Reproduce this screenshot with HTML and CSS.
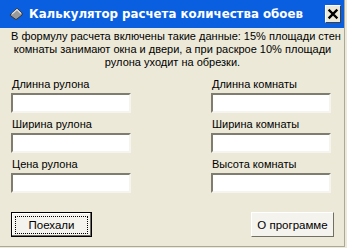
FILE: index.html
```html
<!DOCTYPE html>
<html>
<head>
<meta charset="utf-8">
<link rel="stylesheet" href="styles.css">
</head>
<body>
<div class="window">
  <div class="titlebar">
    <svg class="icon" width="16" height="16" viewBox="0 0 16 16">
      <path d="M2 9 L8 3 Q9 2 10 3 L14 7 Q15 8 14 9 L9 13 Q8 14 7 13 L3 10 Q2 9.5 2 9 Z" fill="#9a9a9a" stroke="#333" stroke-width="1"/>
      <path d="M4 8 L9 3.5 L13 7.5" fill="none" stroke="#e0e0e0" stroke-width="1.2"/>
    </svg>
    <span class="title">Калькулятор расчета количества обоев</span>
    <div class="close">
      <svg width="14" height="16" viewBox="0 0 14 16">
        <path d="M3.5 4.5 L10.5 11.5 M10.5 4.5 L3.5 11.5" stroke="#000" stroke-width="2.4" stroke-linecap="square"/>
      </svg>
    </div>
  </div>
  <div class="content">
    <p class="info">В формулу расчета включены такие данные: 15% площади стен<br>комнаты занимают окна и двери, а при раскрое 10% площади<br>рулона уходит на обрезки.</p>
    <div class="fields">
      <div class="col">
        <label class="field"><span>Длинна рулона</span><input type="text"></label>
        <label class="field"><span>Ширина рулона</span><input type="text"></label>
        <label class="field"><span>Цена рулона</span><input type="text"></label>
      </div>
      <div class="col">
        <label class="field"><span>Длинна комнаты</span><input type="text"></label>
        <label class="field"><span>Ширина комнаты</span><input type="text"></label>
        <label class="field"><span>Высота комнаты</span><input type="text"></label>
      </div>
    </div>
    <div class="buttons">
      <button class="btn default"><span class="focus">Поехали</span></button>
      <button class="btn">О программе</button>
    </div>
  </div>
</div>
</body>
</html>
```

FILE: styles.css
```css
html, body {
  margin: 0;
  padding: 0;
  background: #ece9d8;
}
.window {
  width: 345px;
  height: 247px;
  box-sizing: border-box;
  border-right: 1px solid #aca899;
  border-bottom: 1px solid #aca899;
  background: #ece9d8;
  font-family: "Liberation Sans", Arial, sans-serif;
  font-size: 11px;
  color: #000;
  display: flex;
  flex-direction: column;
}
.titlebar {
  height: 28px;
  background: #0a5fe0;
  display: flex;
  align-items: center;
  padding: 0 3px 0 8px;
  color: #fff;
}
.icon {
  flex: none;
}
.title {
  margin-left: 5px;
  font-family: "DejaVu Sans", sans-serif;
  font-weight: bold;
  font-size: 11.8px;
  flex: 1;
  white-space: nowrap;
}
.close {
  width: 16px;
  height: 18px;
  background: #ece9d8;
  border: 1px solid #fff;
  border-right-color: #404040;
  border-bottom-color: #404040;
  box-sizing: border-box;
  display: flex;
  align-items: center;
  justify-content: center;
}
.content {
  flex: 1;
  display: flex;
  flex-direction: column;
  padding: 2px 0 0 11px;
}
.info {
  margin: 0;
  text-align: center;
  line-height: 13px;
  font-size: 11px;
  white-space: nowrap;
  padding-right: 10px;
}
.fields {
  display: grid;
  grid-template-columns: 120px 120px;
  column-gap: 80px;
  margin-top: 9px;
}
.col {
  display: flex;
  flex-direction: column;
  gap: 5px;
}
.field {
  display: flex;
  flex-direction: column;
}
.field span {
  height: 15px;
  line-height: 13px;
  padding-left: 1px;
  font-size: 11px;
}
.field input {
  width: 120px;
  height: 20px;
  box-sizing: border-box;
  margin: 0;
  background: #fff;
  border: 2px solid;
  border-color: #7f7c70 #f5f4ee #f5f4ee #7f7c70;
  outline: none;
}
.buttons {
  display: flex;
  justify-content: space-between;
  margin-top: 19px;
  padding-right: 10px;
}
.btn {
  font-family: "Liberation Sans", Arial, sans-serif;
  font-size: 11.5px;
  background: #f4f3ee;
  border: 1px solid;
  border-color: #fff #716f64 #716f64 #fff;
  height: 25px;
  width: 83px;
  padding: 0;
  color: #000;
}
.btn.default {
  width: 81px;
  border: 1px solid #000;
  box-shadow: inset -1px -1px 0 #716f64, inset 1px 1px 0 #fff;
  display: flex;
  align-items: center;
  justify-content: center;
}
.focus {
  display: flex;
  align-items: center;
  justify-content: center;
  width: 71px;
  height: 16px;
  outline: 1px dotted #000;
}
```
